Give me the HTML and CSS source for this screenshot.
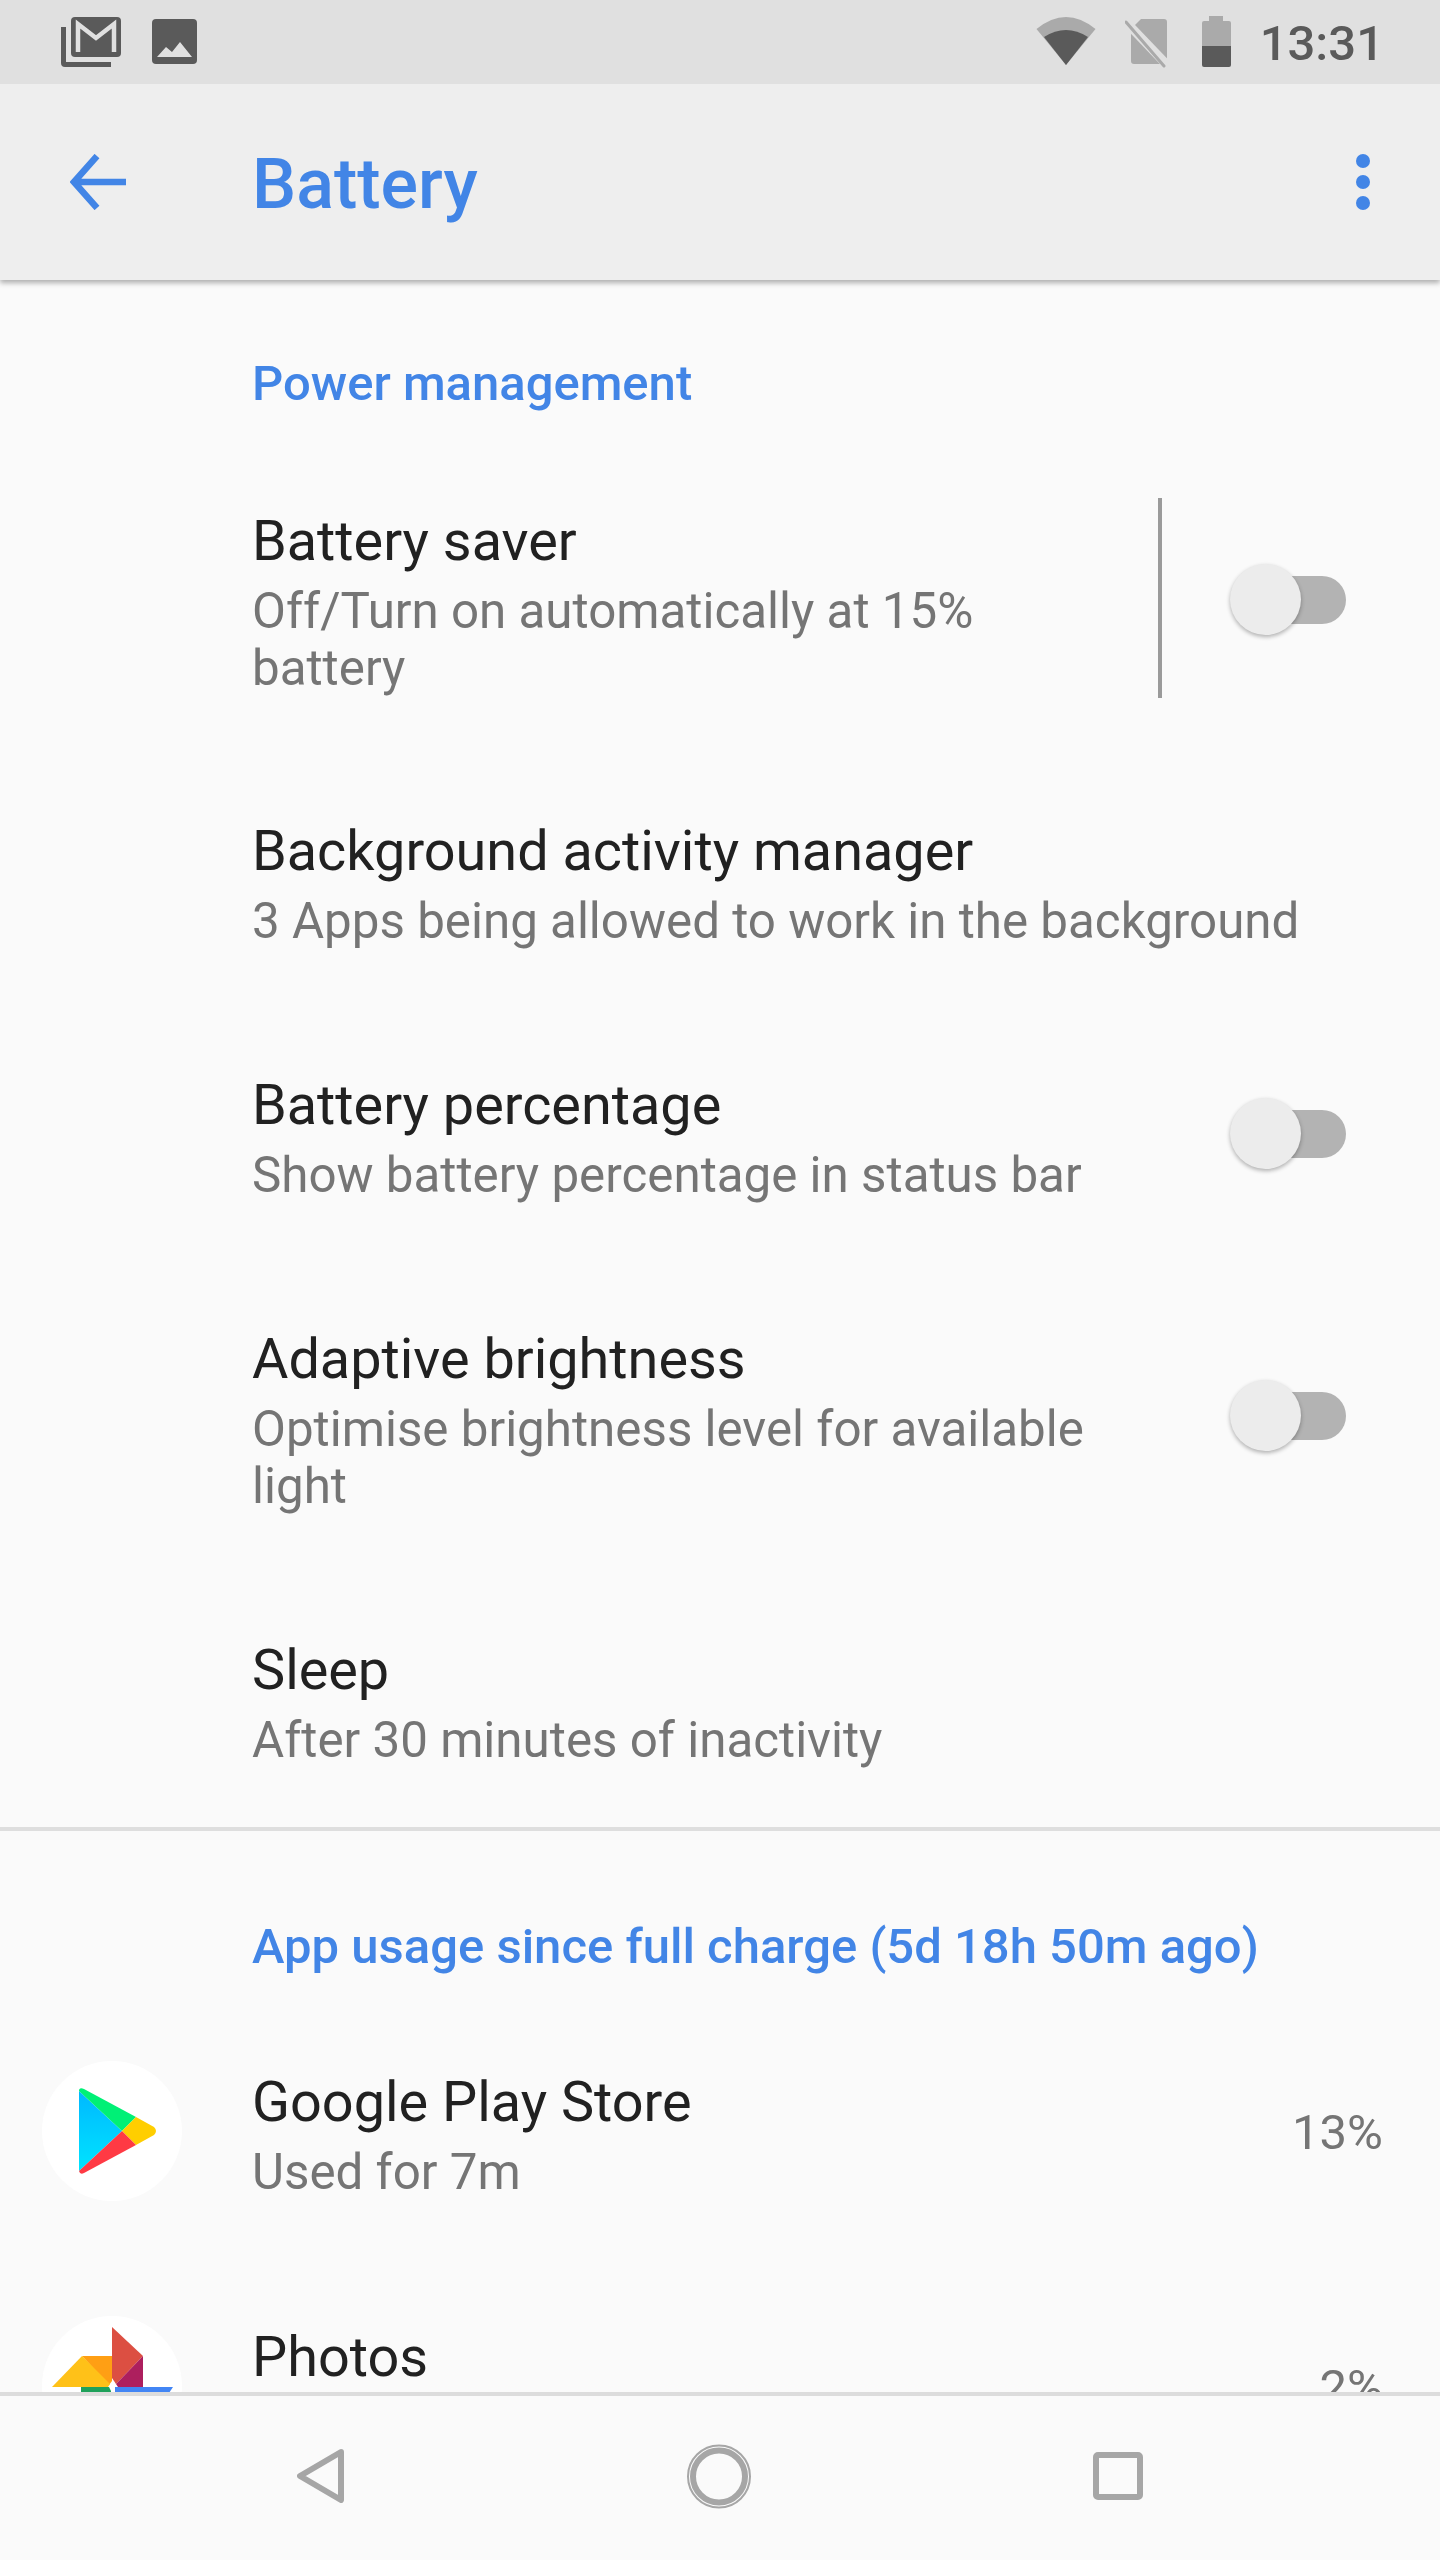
FILE: index.html
```html
<!DOCTYPE html>
<html lang="en">
<head>
<meta charset="utf-8">
<title>Battery</title>
<link rel="stylesheet" href="styles.css">
</head>
<body>
<div class="screen">
  <header class="statusbar">
    <svg class="ic-gmail" width="60" height="50" viewBox="0 0 60 50"><path d="M0 10h5v35h45v5H4a4 4 0 0 1-4-4z" fill="#5a5a5a"/><rect x="10" width="50" height="40" rx="4" fill="#5a5a5a"/><path d="M17 35V7l18 14L53 7v28" fill="none" stroke="#e0e0e0" stroke-width="4.5"/></svg>
    <svg class="ic-image" width="45" height="45" viewBox="0 0 45 45"><rect width="45" height="45" rx="4" fill="#5a5a5a"/><path d="M5 38l9-10 6 5 8-10 12 15z" fill="#e0e0e0"/></svg>
    <div class="status-right">
      <svg width="60" height="48" viewBox="0 0 60 48"><path d="M30 48L.5 12Q30-12 59.5 12z" fill="#aaa"/><path d="M30 48L8 20Q30 6 52 20z" fill="#5a5a5a"/></svg>
      <svg class="ic-sim" width="46" height="49" viewBox="0 0 46 49"><path d="M16 0h23a3 3 0 0 1 3 3v42H9a3 3 0 0 1-3-3V10z" fill="#aaa"/><path d="M2 4l42 44" stroke="#e0e0e0" stroke-width="9"/><path d="M1 3l38 44" stroke="#aaa" stroke-width="3" stroke-linecap="round"/></svg>
      <svg class="ic-batt" width="29" height="51" viewBox="0 0 29 51"><path d="M7 0h14v5h6a2 2 0 0 1 2 2v23H0V7a2 2 0 0 1 2-2h5z" fill="#aaa"/><path d="M0 30h29v19a2 2 0 0 1-2 2H2a2 2 0 0 1-2-2z" fill="#5a5a5a"/></svg>
      <span class="time">13:31</span>
    </div>
  </header>

  <header class="appbar">
    <svg width="56" height="56" viewBox="0 0 56 56"><path d="M56 28H5M27 2L4 28l23 26" fill="none" stroke="#4285e6" stroke-width="6.5"/></svg>
    <h1 class="app-title">Battery</h1>
    <div class="more"><i></i><i></i><i></i></div>
  </header>

  <main class="content">
    <section class="group">
      <h2 class="section-title">Power management</h2>
      <div class="row row-first">
        <div class="text"><div class="title">Battery saver</div><div class="sub">Off/Turn on automatically at 15% battery</div></div>
        <div class="vsep"></div>
        <div class="switch"><span class="knob"></span></div>
      </div>
      <div class="row">
        <div class="text wide"><div class="title">Background activity manager</div><div class="sub">3 Apps being allowed to work in the background</div></div>
      </div>
      <div class="row">
        <div class="text"><div class="title">Battery percentage</div><div class="sub">Show battery percentage in status bar</div></div>
        <div class="switch"><span class="knob"></span></div>
      </div>
      <div class="row">
        <div class="text"><div class="title">Adaptive brightness</div><div class="sub">Optimise brightness level for available light</div></div>
        <div class="switch"><span class="knob"></span></div>
      </div>
      <div class="row">
        <div class="text wide"><div class="title">Sleep</div><div class="sub">After 30 minutes of inactivity</div></div>
      </div>
    </section>
    <section class="group usage">
      <h2 class="section-title">App usage since full charge (5d 18h 50m ago)</h2>
      <div class="app">
        <div class="app-icon">
          <svg width="140" height="140" viewBox="0 0 140 140">
            <defs><linearGradient id="pb" x1="0" y1="0" x2="0" y2="1"><stop offset="0" stop-color="#00b8ff"/><stop offset="1" stop-color="#00e4ff"/></linearGradient></defs>
            <path d="M37 30L80 70 37 110z" fill="url(#pb)"/>
            <path d="M37 30q0-4 5-2l52 28-14 14z" fill="#00f076"/>
            <path d="M94 56l18 10q4 4 0 8L94 84 80 70z" fill="#ffce00"/>
            <path d="M37 110q1 4 5 2l52-28-14-14z" fill="#ff3a44"/>
          </svg>
        </div>
        <div class="text wide"><div class="title">Google Play Store</div><div class="sub">Used for 7m</div></div>
        <div class="pct">13%</div>
      </div>
      <div class="app">
        <div class="app-icon">
          <svg width="140" height="140" viewBox="0 0 140 140">
            <path d="M70 11l31 29-27 28-4-6z" fill="#dc4f42"/>
            <path d="M101 40v31H76l-2-3z" fill="#ad1f5e"/>
            <path d="M40 40h30v25l-3 4z" fill="#ff9f14"/>
            <path d="M10 71l30-31 28 28-2 3z" fill="#ffc118"/>
            <path d="M39 71h28l2 4v20H39z" fill="#1fa15a"/>
            <path d="M73 71h58l-20 30H73z" fill="#4285f4"/>
          </svg>
        </div>
        <div class="text wide"><div class="title">Photos</div><div class="sub">&nbsp;</div></div>
        <div class="pct">2%</div>
      </div>
    </section>
  </main>

  <nav class="navbar">
    <svg width="47" height="54" viewBox="0 0 47 54"><path d="M44 3L3 27l41 24z" fill="none" stroke="#a6a6a6" stroke-width="6" stroke-linejoin="round"/></svg>
    <svg width="64" height="65" viewBox="0 0 64 65"><circle cx="32" cy="32.5" r="31" fill="none" stroke="#a6a6a6" stroke-width="2"/><circle cx="32" cy="32.5" r="26" fill="none" stroke="#a6a6a6" stroke-width="6"/></svg>
    <svg width="50" height="48" viewBox="0 0 50 48"><rect x="3" y="3" width="44" height="42" rx="2" fill="none" stroke="#a6a6a6" stroke-width="6"/></svg>
  </nav>
</div>
</body>
</html>
```
FILE: styles.css
```css
* { box-sizing: border-box; }
html, body { margin: 0; padding: 0; }
body { background: #fafafa; font-family: Roboto, "Noto Sans", sans-serif; }
.screen { width: 1440px; height: 2560px; display: flex; flex-direction: column; overflow: hidden; background: #fafafa; }

.statusbar { height: 84px; flex: none; background: #e0e0e0; display: flex; align-items: flex-start; padding: 17px 56px 0 61px; position: relative; z-index: 3; }
.ic-image { margin: 2px 0 0 31px; }
.status-right { margin-left: auto; display: flex; align-items: flex-start; }
.ic-sim { margin: 2px 0 0 29px; }
.ic-batt { margin: -1px 0 0 31px; }
.time { margin: 1px 0 0 29px; font-size: 49px; line-height: 52px; font-weight: 500; color: #5a5a5a; }

.appbar { height: 196px; flex: none; background: #eeeeee; display: flex; align-items: center; padding: 0 70px; position: relative; z-index: 2; box-shadow: 0 3px 5px rgba(0,0,0,.3); }
.app-title { margin: 3px 0 0 126px; font-size: 70px; line-height: 84px; font-weight: 500; color: #4285e6; }
.more { margin-left: auto; display: flex; flex-direction: column; gap: 7px; }
.more i { display: block; width: 14px; height: 14px; border-radius: 50%; background: #4285e6; }

.content { flex: 1; min-height: 0; overflow: hidden; }
.group { padding-left: 252px; }
.section-title { margin: 0; font-size: 49px; line-height: 60px; font-weight: 500; color: #4285e6; padding-top: 74px; }

.row { display: flex; align-items: center; padding: 57px 94px 56px 0; }
.row-first { padding: 84px 94px 54px 0; }
.row-first .switch { margin-top: 4px; }
.text { width: 860px; flex: none; }
.text.wide { width: auto; flex: 1; min-width: 0; }
.title { font-size: 55.8px; line-height: 84px; color: #212121; }
.sub { font-size: 49.3px; line-height: 57px; color: #757575; }

.vsep { width: 4px; height: 200px; background: #9a9a9a; margin: 0 0 0 46px; }
.switch { position: relative; width: 106px; height: 48px; margin-left: auto; background: #b3b3b3; border-radius: 24px; }
.knob { position: absolute; left: -10px; top: -12px; width: 71px; height: 71px; border-radius: 50%; background: #ececec; box-shadow: 0 2px 4px rgba(0,0,0,.3); }

.usage { border-top: 4px solid #dedede; margin-top: 2px; padding-left: 0; }
.usage .section-title { padding: 86px 0 0 252px; }
.app { display: flex; align-items: center; padding: 83px 57px 0 42px; }
.app + .app { padding-top: 114px; }
.app-icon { width: 140px; height: 140px; flex: none; border-radius: 50%; background: #fff; margin-right: 70px; }
.app-icon svg { display: block; }
.pct { font-size: 49px; color: #757575; margin-top: 3px; }

.navbar { height: 168px; flex: none; border-top: 4px solid #dcdcdc; background: #fafafa; display: flex; align-items: center; gap: 342.5px; padding: 0 0 4px 297px; }
```
